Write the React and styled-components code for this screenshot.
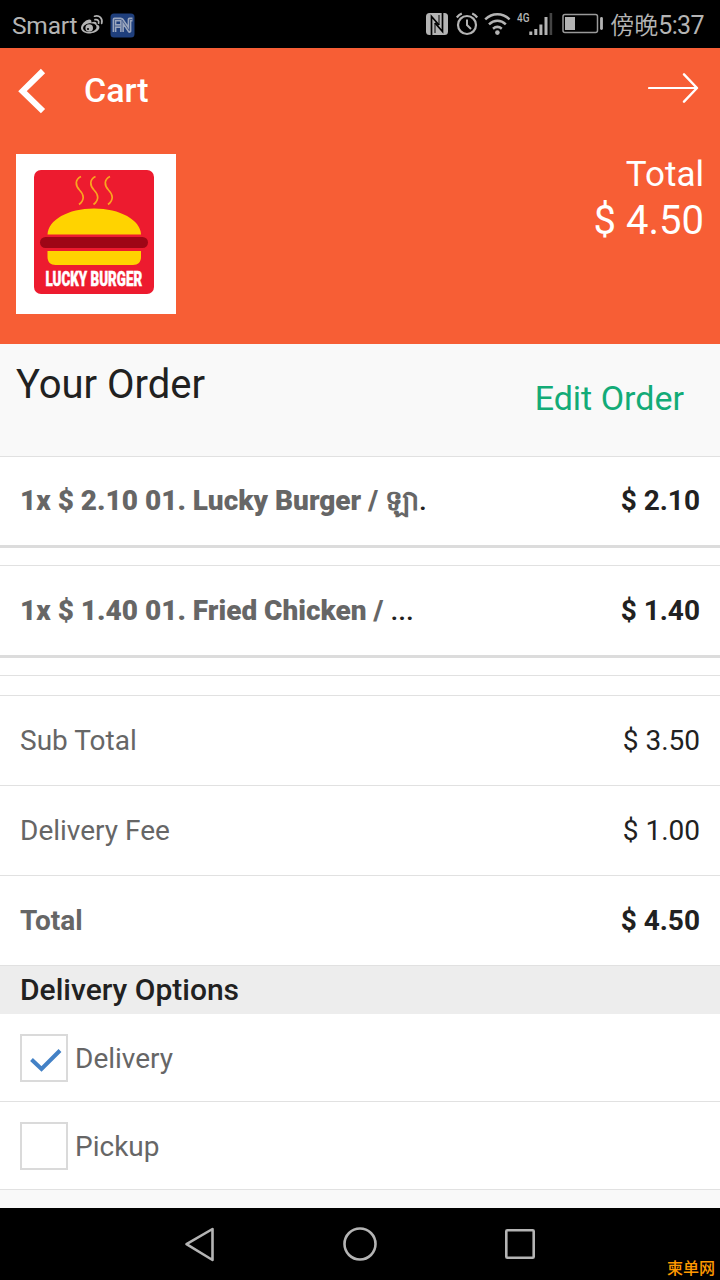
import React, { useState } from 'react';
import styled, { createGlobalStyle } from 'styled-components';

const GlobalStyle = createGlobalStyle`
  * {
    box-sizing: border-box;
  }

  body {
    margin: 0;
    background: #000;
    font-family: Roboto, 'Noto Sans CJK TC', sans-serif;
  }
`;

const Screen = styled.div`
  width: 720px;
  height: 1280px;
  display: flex;
  flex-direction: column;
  background: #f9f9f9;
  color: #212121;
  overflow: hidden;
`;

const StatusBar = styled.div`
  height: 48px;
  padding: 2px 16px 0 12px;
  display: flex;
  align-items: center;
  justify-content: space-between;
  background: #000;
  color: #b4b4b4;
`;

const StatusGroup = styled.div`
  display: flex;
  align-items: center;

  svg {
    display: block;
  }
`;

const Carrier = styled.span`
  width: 68px;
  font-size: 24.5px;
  font-weight: 400;
  letter-spacing: -0.2px;
`;

const AppIcons = styled.span`
  display: flex;
  align-items: center;
  gap: 6px;
`;

const Clock = styled.span`
  display: flex;
  align-items: center;
  margin-left: 6px;
  padding-top: 1px;
  font-size: 24px;
  font-weight: 350;
  line-height: 30px;
  white-space: nowrap;
`;

const Digits = styled.span`
  font-size: 25px;
  font-weight: 400;
  letter-spacing: -0.6px;
`;

const Header = styled.header`
  height: 296px;
  background: #f75e35;
  color: #fff;
`;

const NavBar = styled.div`
  height: 106px;
  padding: 0 21px 20px 18px;
  display: flex;
  align-items: center;
`;

const Title = styled.h1`
  flex: 1;
  margin: 0 0 0 37px;
  padding-bottom: 2px;
  font-size: 34px;
  font-weight: 500;
  line-height: 40px;
`;

const Summary = styled.div`
  padding: 0 16px;
  display: flex;
  justify-content: space-between;
`;

const Logo = styled.div`
  width: 160px;
  height: 160px;
  background: #fff;
`;

const Amount = styled.div`
  padding-top: 1px;
  text-align: right;
  font-size: 35px;
  line-height: 40px;

  strong {
    display: block;
    margin-top: 3px;
    font-size: 40px;
    font-weight: 400;
    line-height: 46px;
  }
`;

const OrderHead = styled.div`
  height: 113px;
  padding: 17px 36px 0 16px;
  display: flex;
  justify-content: space-between;
  border-bottom: 1px solid #e1e1e1;
`;

const Heading = styled.h2`
  margin: 0;
  font-size: 40px;
  font-weight: 400;
  line-height: 48px;
`;

const EditLink = styled.a`
  padding-top: 16px;
  color: #13ab77;
  font-size: 34px;
  line-height: 42px;
`;

const Row = styled.div`
  height: ${props => props.height}px;
  padding: 0 20px;
  display: flex;
  align-items: center;
  justify-content: space-between;
  background: #fff;
  border-bottom: ${props => (props.thick ? '3px solid #dcdcdc' : '1px solid #e1e1e1')};
  font-size: 28px;
  line-height: 34px;
  font-weight: ${props => (props.bold ? 700 : 400)};
  white-space: nowrap;
`;

const Spacer = styled.div`
  height: ${props => props.height}px;
  background: #fff;
  border-bottom: 1px solid #e1e1e1;
`;

const Label = styled.span`
  color: #666;
`;

const ItemName = styled(Label)`
  font-weight: 900;
`;

const Dots = styled.span`
  color: #212121;
  font-weight: 500;
`;

const SectionTitle = styled.h3`
  height: 48px;
  margin: 0;
  padding: 0 20px;
  background: #ededed;
  font-size: 30px;
  font-weight: 500;
  line-height: 48px;
`;

const Option = styled.label`
  height: 88px;
  padding: 0 20px;
  display: flex;
  align-items: center;
  gap: 7px;
  background: #fff;
  border-bottom: 1px solid #e1e1e1;
  color: #666;
  font-size: 28px;
`;

const OptionName = styled.span`
  padding-top: 2px;
`;

const Box = styled.span`
  width: 48px;
  height: 48px;
  border: 2px solid #dadada;
  background: #fff;
`;

const HiddenInput = styled.input`
  display: none;
`;

const BottomBar = styled.nav`
  height: 72px;
  margin-top: auto;
  position: relative;
  display: flex;
  align-items: center;
  justify-content: center;
  gap: 120px;
  background: #000;
`;

const Watermark = styled.span`
  position: absolute;
  right: 5px;
  bottom: 1px;
  color: #f90;
  font-family: 'Noto Sans CJK SC', sans-serif;
  font-size: 16px;
  font-weight: 500;
  line-height: 24px;
`;

const WeiboIcon = () => (
  <svg width="24" height="24" viewBox="0 0 24 24" fill="none" stroke="#b4b4b4">
    <path d="M9 6.5C5 7 .8 12 1 15.2c.3 3.6 5 5.4 9.4 5.2 5-.3 9.2-3 9-6.3-.1-1.700-1.500-2.500-2.800-2.700.5-2.300-1.500-3.400-5.200-2C11.600 7.300 11 6.300 9 6.500z" fill="#b4b4b4" stroke="none" />
    <ellipse cx="9.800" cy="14.600" rx="6.800" ry="4.400" fill="#000" stroke="none" transform="rotate(-8 9.800 14.600)" />
    <circle cx="9.200" cy="15" r="3.800" fill="#b4b4b4" stroke="none" />
    <circle cx="8" cy="16" r="1.100" fill="#000" stroke="none" />
    <path d="M14.500 3.200c4.900-1.400 8.500 2.300 7.200 7.200M15 6.700c2.700-.6 4.200 1.200 3.600 3.500" strokeWidth="1.700" strokeLinecap="round" />
  </svg>
);

const FnIcon = () => (
  <svg width="25" height="25" viewBox="0 0 25 25" fill="none">
    <rect x=".5" y=".5" width="24" height="24" rx="3.500" fill="#1f3f7c" />
    <path d="M4.500 19V6.500h7M4.500 13h6M12 19V7l7.500 11V6.500h3" stroke="#9aa6bd" strokeWidth="3.800" strokeLinejoin="round" />
    <path d="M4.500 19V6.500h7M4.500 13h6M12 19V7l7.500 11V6.500h3" stroke="#4a6190" strokeWidth="1" />
  </svg>
);

// nfc, alarm, wifi, network and battery
const StatusIcons = () => (
  <svg width="178" height="28" viewBox="0 0 178 28" fill="none" stroke="#b4b4b4">
    <rect x="0" y="2" width="22" height="22" rx="3.500" fill="#b4b4b4" stroke="none" />
    <path d="M5.500 24V5.500L13 14M16.500 2v18.500L9 12" stroke="#000" strokeWidth="1.700" />
    <path d="M9 12v10M13 14V4" stroke="#000" strokeWidth="1" />
    <circle cx="41" cy="14" r="9" strokeWidth="2.200" />
    <path d="M41 8.500V14l4 4" strokeWidth="2" />
    <path d="M30.800 6.500a14 14 0 0 1 5-4M46.200 2.500a14 14 0 0 1 5 4" strokeWidth="2.200" />
    <path d="M59.200 8.300c7.200-6.700 17.200-6.700 24.400 0M63 13.300c5-4.700 11.800-4.700 16.800 0M67 17.700c2.800-2.300 6-2.300 8.800 0" strokeWidth="2.500" />
    <circle cx="71.400" cy="21.600" r="2.300" fill="#b4b4b4" stroke="none" />
    <text x="91" y="11" fill="#b4b4b4" stroke="none" fontFamily="Roboto" fontSize="13.500" fontWeight="500" textLength="12.500" lengthAdjust="spacingAndGlyphs">4G</text>
    <path d="M104.800 20.500V24M109.800 18v6M114.900 13.500V24M120 6v18" strokeWidth="3" />
    <path d="M124.900 2v22" stroke="#444" strokeWidth="2.600" />
    <rect x="137" y="3.500" width="34.500" height="18" rx="2" stroke="#999" strokeWidth="1.500" />
    <path d="M139 6h10v13h-10z" fill="#b4b4b4" stroke="none" />
    <path d="M175.500 7.500v10" strokeWidth="2.800" strokeLinecap="round" />
  </svg>
);

const BackIcon = () => (
  <svg width="29" height="46" viewBox="0 0 29 46" fill="none">
    <path d="M25 3 4.500 23.200 25 43.200" stroke="#fff" strokeWidth="6" />
  </svg>
);

const ArrowIcon = () => (
  <svg width="51" height="36" viewBox="0 0 51 36" fill="none" stroke="#fff" strokeLinecap="round" strokeLinejoin="round">
    <path d="M1 15h47" strokeWidth="2.200" />
    <path d="M36 1.300 49 15 36 28.700" strokeWidth="2.400" />
  </svg>
);

const BurgerLogo = () => (
  <svg width="160" height="160" viewBox="0 0 160 160" fill="none">
    <rect x="18" y="16" width="120" height="124" rx="7" fill="#ed1b2f" />
    <path d="M65 22.500c-6 3-6 8.500-1.500 13.500 4.500 4.500 5.500 10-.5 14.500M79.500 22.500c-6 3-6 8.500-1.500 13.500 4.500 4.500 5.500 10-.5 14.500M94 22.500c-6 3-6 8.500-1.500 13.500 4.500 4.500 5.500 10-.5 14.500" stroke="#f9a51f" strokeWidth="1.700" />
    <path d="M31.500 80.500C32 66 52 54.500 78 54.500s46.500 11.500 47 26z" fill="#ffd300" />
    <rect x="24" y="83" width="108" height="11" rx="5.500" fill="#9e0616" />
    <path d="M31.500 97H125v6c0 5-3 8-8 8H39.500c-5 0-8-3-8-8z" fill="#ffd300" />
    <text transform="translate(29.500 131.500) scale(.64 1)" fill="#fff" stroke="#fff" strokeWidth=".5" fontFamily="Roboto" fontSize="20.500" fontWeight="900" textLength="151" lengthAdjust="spacingAndGlyphs">LUCKY BURGER</text>
  </svg>
);

const CheckIcon = () => (
  <svg width="44" height="44" viewBox="0 0 44 44" fill="none">
    <path d="M9.500 23.500 19.500 33 38 14.500" stroke="#4381c6" strokeWidth="4" />
  </svg>
);

const charges = [
  { label: 'Sub Total', value: '$ 3.50' },
  { label: 'Delivery Fee', value: '$ 1.00' },
  { label: 'Total', value: '$ 4.50', bold: true },
];

export default function App() {
  const [method, setMethod] = useState('Delivery');

  return (
    <Screen>
      <GlobalStyle />
      <StatusBar>
        <StatusGroup>
          <Carrier>Smart</Carrier>
          <AppIcons>
            <WeiboIcon />
            <FnIcon />
          </AppIcons>
        </StatusGroup>
        <StatusGroup>
          <StatusIcons />
          <Clock>傍晚<Digits>5:37</Digits></Clock>
        </StatusGroup>
      </StatusBar>

      <Header>
        <NavBar>
          <BackIcon />
          <Title>Cart</Title>
          <ArrowIcon />
        </NavBar>
        <Summary>
          <Logo><BurgerLogo /></Logo>
          <Amount>
            Total
            <strong>$ 4.50</strong>
          </Amount>
        </Summary>
      </Header>

      <OrderHead>
        <Heading>Your Order</Heading>
        <EditLink>Edit Order</EditLink>
      </OrderHead>

      <Row height={91} bold thick>
        <ItemName>1x $ 2.10 01. Lucky Burger / ឡា<Dots>.</Dots></ItemName>
        <span>$ 2.10</span>
      </Row>
      <Spacer height={18} />
      <Row height={92} bold thick>
        <ItemName>1x $ 1.40 01. Fried Chicken / <Dots>...</Dots></ItemName>
        <span>$ 1.40</span>
      </Row>
      <Spacer height={18} />
      <Spacer height={20} />

      {charges.map(charge => (
        <Row key={charge.label} height={90} bold={charge.bold}>
          <Label>{charge.label}</Label>
          <span>{charge.value}</span>
        </Row>
      ))}

      <SectionTitle>Delivery Options</SectionTitle>
      {['Delivery', 'Pickup'].map(name => (
        <Option key={name}>
          <HiddenInput type="radio" checked={method === name} onChange={() => setMethod(name)} />
          <Box>{method === name && <CheckIcon />}</Box>
          <OptionName>{name}</OptionName>
        </Option>
      ))}

      <BottomBar>
        <svg width="40" height="40" viewBox="0 0 40 40" fill="none" stroke="#b4b4b4" strokeWidth="2.600" strokeLinejoin="round">
          <path d="M32.500 5v31L6.500 20.200z" />
        </svg>
        <svg width="40" height="40" viewBox="0 0 40 40" fill="none" stroke="#b4b4b4" strokeWidth="2.600">
          <circle cx="20" cy="20" r="15.500" />
        </svg>
        <svg width="40" height="40" viewBox="0 0 40 40" fill="none" stroke="#b4b4b4" strokeWidth="2.600">
          <rect x="6.300" y="6.300" width="27.400" height="27.400" rx="1" />
        </svg>
        <Watermark>柬单网</Watermark>
      </BottomBar>
    </Screen>
  );
}
